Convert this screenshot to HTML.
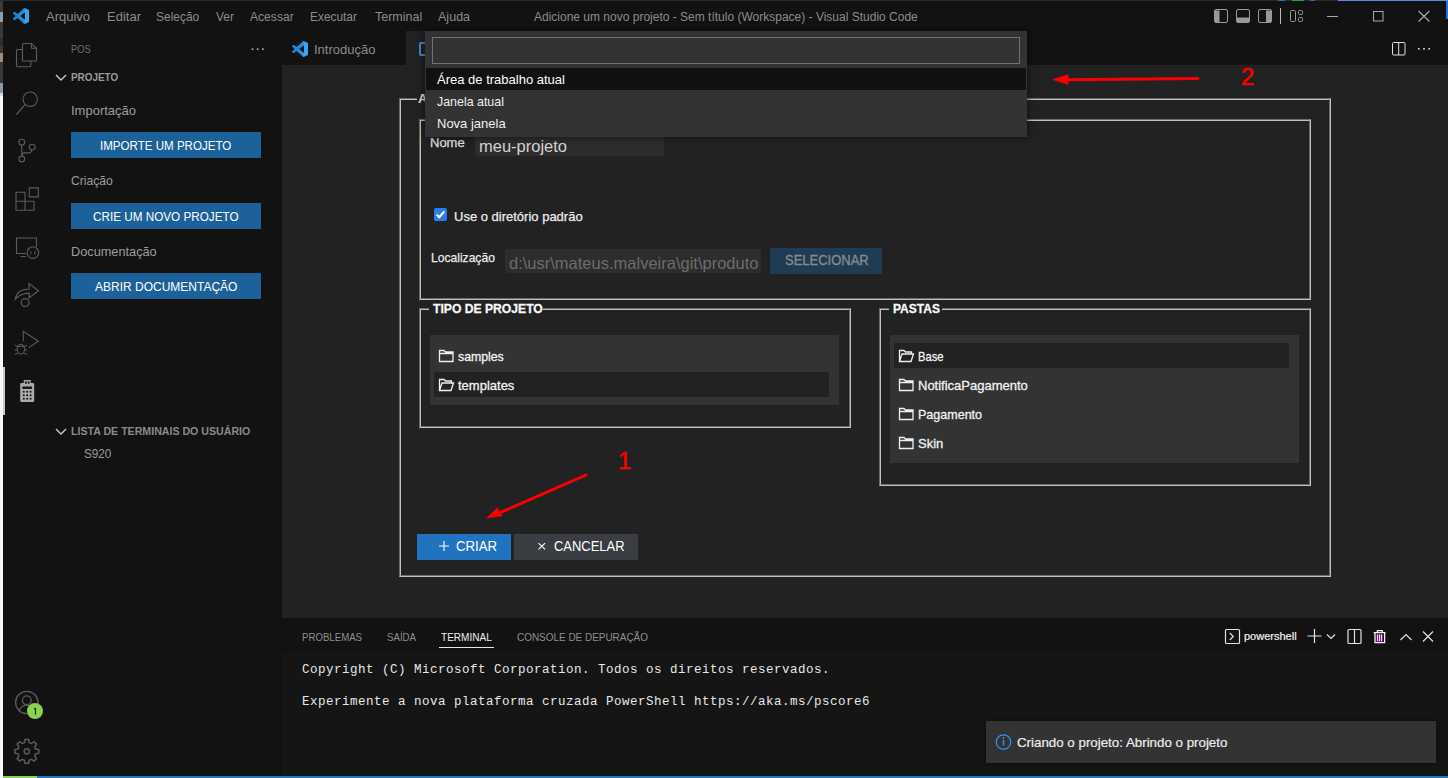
<!DOCTYPE html>
<html><head><meta charset="utf-8">
<style>
*{margin:0;padding:0;box-sizing:border-box}
html,body{width:1448px;height:778px;overflow:hidden;background:#121212;font-family:"Liberation Sans",sans-serif}
.a{position:absolute}
.t{position:absolute;white-space:nowrap;line-height:1}
svg{position:absolute;overflow:visible}
</style></head><body>
<!-- left strip of background window -->
<div class="a" style="left:0;top:0;width:3px;height:83px;background:#3a3a3a"></div>
<div class="a" style="left:0;top:12px;width:3px;height:10px;background:#8c9cac"></div>
<div class="a" style="left:0;top:38px;width:3px;height:8px;background:#2e2e2e"></div>
<div class="a" style="left:0;top:53px;width:3px;height:9px;background:#a08a78"></div>
<div class="a" style="left:0;top:83px;width:3px;height:10px;background:#8a98a8"></div>
<div class="a" style="left:0;top:93px;width:3px;height:3px;background:#d8d8d8"></div>
<div class="a" style="left:0;top:96px;width:3px;height:682px;background:#f8f8f8"></div>
<div class="a" style="left:0;top:0;width:1448px;height:1px;background:#2a2a2a"></div>
<div class="a" style="left:1278px;top:0;width:7px;height:1px;background:#2a6ad0"></div>
<div class="a" style="left:1292px;top:0;width:12px;height:1px;background:#20a050"></div>
<div class="a" style="left:1310px;top:0;width:5px;height:1px;background:#2a6ad0"></div>
<div class="a" style="left:1338px;top:0;width:110px;height:1px;background:#5a8ae0"></div>

<!-- title bar -->
<div id="titlebar" class="a" style="left:3px;top:1px;width:1445px;height:30px;background:#121212"></div>
<svg style="left:13px;top:8px" width="16" height="16" viewBox="0 0 100 100"><defs><linearGradient id="lg" x1="0" y1="0" x2="1" y2="0"><stop offset="0" stop-color="#1f80d4"/><stop offset="0.7" stop-color="#2a8fe0"/><stop offset="0.75" stop-color="#3aa4f2"/><stop offset="1" stop-color="#3aa4f2"/></linearGradient></defs>
  <path d="M96.5 10.8 75.9.9a6.2 6.2 0 0 0-7.1 1.2L29.4 38 12.2 25a4.1 4.1 0 0 0-5.3.2L1.4 30.3a4.1 4.1 0 0 0 0 6.1L16.3 50 1.4 63.6a4.1 4.1 0 0 0 0 6.1l5.5 5a4.1 4.1 0 0 0 5.3.2l17.2-13 39.4 35.9a6.2 6.2 0 0 0 7.1 1.2l20.6-9.9a6.2 6.2 0 0 0 3.5-5.6V16.4a6.2 6.2 0 0 0-3.5-5.6zM75 72.7 45.1 50 75 27.3z" fill="url(#lg)"/>
</svg>
<div class="t" style="left:46px;top:10px;font-size:13px;color:#8c8c8c">Arquivo</div>
<div class="t" style="left:107px;top:10px;font-size:13px;color:#8c8c8c">Editar</div>
<div class="t" style="left:156px;top:10px;font-size:13px;color:#8c8c8c;transform:scaleX(0.92);transform-origin:0 0">Seleção</div>
<div class="t" style="left:216px;top:10px;font-size:13px;color:#8c8c8c;transform:scaleX(0.92);transform-origin:0 0">Ver</div>
<div class="t" style="left:250px;top:10px;font-size:13px;color:#8c8c8c;transform:scaleX(0.93);transform-origin:0 0">Acessar</div>
<div class="t" style="left:310px;top:10px;font-size:13px;color:#8c8c8c;transform:scaleX(0.915);transform-origin:0 0">Executar</div>
<div class="t" style="left:375px;top:10px;font-size:13px;color:#8c8c8c;transform:scaleX(0.96);transform-origin:0 0">Terminal</div>
<div class="t" style="left:438px;top:10px;font-size:13px;color:#8c8c8c;transform:scaleX(0.965);transform-origin:0 0">Ajuda</div>
<div id="title" class="t" style="left:534px;top:11px;font-size:12px;color:#8c8c8c">Adicione um novo projeto - Sem título (Workspace) - Visual Studio Code</div>

<!-- window controls -->
<svg style="left:0;top:0" width="1448" height="65" fill="none" stroke="#999" stroke-width="1">
  <rect x="1214.5" y="9.5" width="13" height="13" rx="1.5"/>
  <path d="M1215 10.5h4.5v11.5h-4.5z" fill="#999" stroke="none"/>
  <rect x="1236.5" y="9.5" width="13" height="13" rx="1.5"/>
  <path d="M1237 17.5h12v4.5h-12z" fill="#999" stroke="none"/>
  <rect x="1258.5" y="9.5" width="13" height="13" rx="1.5"/>
  <path d="M1266 10.5h5v11.5h-5z" fill="#999" stroke="none"/>
  <path d="M1280.5 8v16" stroke="#bbb"/>
  <rect x="1290.5" y="10.5" width="5" height="11" rx="1"/>
  <rect x="1298.5" y="10.5" width="4" height="4" rx="1"/>
  <rect x="1298.5" y="17.5" width="4" height="4" rx="1"/>
  <path d="M1327 16.5h11" stroke="#aaa"/>
  <rect x="1373.5" y="11.5" width="9.5" height="9.5" stroke="#aaa"/>
  <path d="M1418.5 11l11 10.5M1429.5 11l-11 10.5" stroke="#aaa" stroke-width="1.1"/>
  <rect x="1392.5" y="42.5" width="12.5" height="12.5" rx="1" stroke="#ddd"/>
  <path d="M1398.7 42.5v12.5" stroke="#ddd"/>
  <g fill="#ddd" stroke="none"><rect x="1418" y="48" width="1.6" height="1.6"/><rect x="1423.2" y="48" width="1.6" height="1.6"/><rect x="1428.4" y="48" width="1.6" height="1.6"/></g>
  <!-- sidebar ... and chevrons -->
  <g fill="#aaa" stroke="none"><rect x="251.7" y="48.3" width="1.7" height="1.7"/><rect x="256.8" y="48.3" width="1.7" height="1.7"/><rect x="262" y="48.3" width="1.7" height="1.7"/></g>
</svg>
<div class="a" style="left:1446px;top:1px;width:2px;height:18px;background:#1a73e8"></div>

<!-- activity bar -->
<div id="actbar" class="a" style="left:3px;top:31px;width:48px;height:745px;background:#121212"></div>
<svg style="left:0;top:0" width="51" height="778" fill="none" stroke="#5c5c5c" stroke-width="1.1">
  <!-- files -->
  <path d="M22.5 49.5h-5a1 1 0 0 0-1 1v15.3a1 1 0 0 0 1 1h12.3a1 1 0 0 0 1-1v-5.3"/>
  <path d="M23.5 43.5h8l5 4.8v11.7a1 1 0 0 1-1 1h-12a1 1 0 0 1-1-1v-15.5a1 1 0 0 1 1-1z"/>
  <path d="M31.5 43.5v4.8h5"/>
  <!-- search -->
  <circle cx="30.2" cy="99.2" r="7.2"/>
  <path d="M25.2 104.3 16.4 114.6" stroke-width="1.3"/>
  <!-- scm -->
  <circle cx="21.8" cy="142.2" r="2.9"/>
  <circle cx="32.2" cy="147.1" r="2.9"/>
  <circle cx="21.8" cy="159" r="2.9"/>
  <path d="M21.8 145.1v11M21.8 156c0-2.4 1.2-3.1 3.2-3.1h4.2c1.4 0 2.2-1 2.6-3"/>
  <!-- extensions -->
  <path d="M16 192.2h9v9h-9zM16 201.2h9v9h-9zM25 201.2h9v9h-9z"/>
  <path d="M29.3 187.9h9v9h-9z"/>
  <!-- remote explorer -->
  <path d="M26 253.5h-9.5v-15.5h20v8.5"/>
  <path d="M20.5 256.5h5.5"/>
  <circle cx="32.9" cy="252.6" r="5.8"/>
  <path d="M29.8 251l2 1.8-2 1.8M36 251l-2 1.8 2 1.8" stroke-width="0.9"/>
  <!-- live share -->
  <path d="M15.3 299.2c0.8-6.5 6-10 13.8-10.2v-5.4l9.3 7.2-9.3 7.1v-4.8c-6 0.1-10.6 2.5-13.8 6.1z" stroke-width="1.2"/>
  <circle cx="25.1" cy="302.6" r="3.9" stroke-width="1.2"/>
  <!-- run & debug -->
  <path d="M23.3 341.2v-10l15 10-9.7 6.4"/>
  <ellipse cx="20.9" cy="349.2" rx="3.6" ry="4.8"/>
  <path d="M17.5 346.5h7M15 345l2.5 1.6M26.8 345l-2.5 1.6M14.8 350h2.3M24.7 350h2.3M15 354.6l2.5-1.6M26.8 354.6l-2.5-1.6"/>
  <!-- accounts -->
  <circle cx="26.8" cy="702.5" r="11.2" stroke-width="1.3"/>
  <circle cx="26.8" cy="700.2" r="4.4" stroke-width="1.3"/>
  <path d="M19 710.5c1.8-3.4 4.6-5.4 7.8-5.4s6 2 7.8 5.4" stroke-width="1.3"/>
  <!-- gear -->
  <path d="M25 739.5h3.6l0.6 3.1 2.2 0.9 2.6-1.8 2.5 2.5-1.8 2.6 0.9 2.2 3.1 0.6v3.6l-3.1 0.6-0.9 2.2 1.8 2.6-2.5 2.5-2.6-1.8-2.2 0.9-0.6 3.1H25l-0.6-3.1-2.2-0.9-2.6 1.8-2.5-2.5 1.8-2.6-0.9-2.2-3.1-0.6v-3.6l3.1-0.6 0.9-2.2-1.8-2.6 2.5-2.5 2.6 1.8 2.2-0.9z" stroke-width="1.5"/>
  <circle cx="26.8" cy="751.3" r="2.6" stroke-width="1.5"/>
</svg>
<!-- active indicator + calculator icon -->
<div class="a" style="left:3px;top:367px;width:2px;height:48px;background:#c8c8c8"></div>
<svg style="left:0;top:0" width="51" height="420">
  <path d="M21.5 383h2.2v-3h7v3h2.2a1.3 1.3 0 0 1 1.3 1.3v16.4a1.3 1.3 0 0 1-1.3 1.3H21.5a1.3 1.3 0 0 1-1.3-1.3V384.3a1.3 1.3 0 0 1 1.3-1.3z" fill="#aaaaaa"/>
  <path d="M25 381.2h1.6v2.6H25zM27.8 381.2h1.6v2.6h-1.6z" fill="#121212"/>
  <rect x="22.3" y="386.5" width="9.8" height="2.4" fill="#121212"/>
  <g fill="#121212">
    <circle cx="23.8" cy="391.8" r="1"/><circle cx="27.2" cy="391.8" r="1"/><circle cx="30.6" cy="391.8" r="1"/>
    <circle cx="23.8" cy="395.3" r="1"/><circle cx="27.2" cy="395.3" r="1"/><circle cx="30.6" cy="395.3" r="1"/>
    <circle cx="23.8" cy="398.8" r="1"/><circle cx="27.2" cy="398.8" r="1"/><circle cx="30.6" cy="398.8" r="1"/>
  </g>
</svg>
<!-- account badge -->
<div class="a" style="left:27px;top:703px;width:16px;height:16px;border-radius:50%;background:#8bd24f"></div>
<svg style="left:0;top:0" width="51" height="778"><path d="M35.5 708v6.8M35.5 708.2l-1.3 1" stroke="#3a1a22" stroke-width="1.1" fill="none"/></svg>

<!-- sidebar -->
<div class="t" style="left:71px;top:44px;font-size:11px;color:#6e6e6e;transform:scaleX(0.85);transform-origin:0 0">POS</div>
<div class="t" style="left:71px;top:72px;font-size:11px;font-weight:bold;color:#9a9a9a;transform:scaleX(0.9);transform-origin:0 0">PROJETO</div>
<div class="t" style="left:71px;top:104px;font-size:13px;color:#9d9d9d">Importação</div>
<div class="a" style="left:71px;top:132px;width:190px;height:26px;background:#1c619a"></div>
<div class="t" style="left:100px;top:140px;font-size:12px;color:#fff;transform:scaleX(0.964);transform-origin:0 0">IMPORTE UM PROJETO</div>
<div class="t" style="left:71px;top:174px;font-size:13px;color:#9d9d9d;transform:scaleX(0.935);transform-origin:0 0">Criação</div>
<div class="a" style="left:71px;top:203px;width:190px;height:26px;background:#1c619a"></div>
<div class="t" style="left:93px;top:211px;font-size:12px;color:#fff;transform:scaleX(0.976);transform-origin:0 0">CRIE UM NOVO PROJETO</div>
<div class="t" style="left:71px;top:245px;font-size:13px;color:#9d9d9d;transform:scaleX(0.98);transform-origin:0 0">Documentação</div>
<div class="a" style="left:71px;top:273px;width:190px;height:26px;background:#1c619a"></div>
<div class="t" style="left:95px;top:281px;font-size:12px;color:#fff">ABRIR DOCUMENTAÇÃO</div>
<div class="t" style="left:71px;top:426px;font-size:11px;font-weight:bold;color:#8a8a8a;transform:scaleX(0.965);transform-origin:0 0">LISTA DE TERMINAIS DO USUÁRIO</div>
<div class="t" style="left:84px;top:447px;font-size:13px;color:#9d9d9d;transform:scaleX(0.9);transform-origin:0 0">S920</div>

<!-- tabs -->
<div class="a" style="left:406px;top:31px;width:200px;height:34px;background:#222"></div>
<div class="t" style="left:314px;top:43px;font-size:13px;color:#8c8c8c">Introdução</div>
<svg style="left:292px;top:41px" width="16" height="16" viewBox="0 0 100 100">
  <path d="M96.5 10.8 75.9.9a6.2 6.2 0 0 0-7.1 1.2L29.4 38 12.2 25a4.1 4.1 0 0 0-5.3.2L1.4 30.3a4.1 4.1 0 0 0 0 6.1L16.3 50 1.4 63.6a4.1 4.1 0 0 0 0 6.1l5.5 5a4.1 4.1 0 0 0 5.3.2l17.2-13 39.4 35.9a6.2 6.2 0 0 0 7.1 1.2l20.6-9.9a6.2 6.2 0 0 0 3.5-5.6V16.4a6.2 6.2 0 0 0-3.5-5.6zM75 72.7 45.1 50 75 27.3z" fill="url(#lg)"/>
</svg>
<div class="a" style="left:419px;top:42px;width:12px;height:14px;border:2px solid #3c8ad6;border-radius:2px"></div>

<!-- editor -->
<div id="editor" class="a" style="left:282px;top:65px;width:1166px;height:553px;background:#222"></div>
<div class="a" style="left:399px;top:98px;width:932px;height:479px;border:2px groove rgb(192,192,192)"></div>
<div class="a" style="left:419px;top:119px;width:892px;height:181px;border:2px groove rgb(192,192,192)"></div>
<div class="a" style="left:419px;top:308px;width:432px;height:120px;border:2px groove rgb(192,192,192)"></div>
<div class="a" style="left:879px;top:308px;width:432px;height:178px;border:2px groove rgb(192,192,192)"></div>

<!-- form content -->
<div class="a" style="left:475px;top:135px;width:189px;height:21px;border-radius:3px;background:#2d2d2d"></div>
<div class="t" style="left:430px;top:136px;font-size:13px;color:#e0e0e0;-webkit-text-stroke:0.25px #e0e0e0">Nome</div>
<div class="t" style="left:479px;top:138px;font-size:16.5px;color:#d4d4d4">meu-projeto</div>
<div class="a" style="left:434px;top:208px;width:13px;height:13px;border-radius:2px;background:#2a7de8"></div>
<svg style="left:434px;top:208px" width="13" height="13"><path d="M2.6 6.6l2.6 2.6 5.2-5.8" fill="none" stroke="#fff" stroke-width="2"/></svg>
<div class="t" style="left:454px;top:210px;font-size:13px;color:#ececec;-webkit-text-stroke:0.25px #ececec">Use o diretório padrão</div>
<div class="t" style="left:431px;top:251px;font-size:13px;color:#eaeaea;-webkit-text-stroke:0.25px #eaeaea;transform:scaleX(0.93);transform-origin:0 0">Localização</div>
<div class="a" style="left:505px;top:249px;width:256px;height:24px;border-radius:3px;background:#2d2d2d;overflow:hidden">
  <div class="t" style="left:4px;top:6px;font-size:16.5px;color:#6c6c6c">d:\usr\mateus.malveira\git\produto</div>
</div>
<div class="a" style="left:770px;top:248px;width:112px;height:26px;background:#203c55"></div>
<div class="t" style="left:785px;top:253px;font-size:14px;color:#8a8a8a;-webkit-text-stroke:0.3px #8a8a8a;transform:scaleX(0.927);transform-origin:0 0">SELECIONAR</div>

<!-- legends -->
<div class="a" style="left:417px;top:94px;width:20px;height:10px;background:#222"></div>
<div class="t" style="left:418px;top:92px;font-size:13px;font-weight:bold;color:#e0e0e0">ADICIONE</div>
<div class="a" style="left:429px;top:300px;width:114px;height:14px;background:#222"></div>
<div class="t" style="left:433px;top:302px;font-size:13.5px;font-weight:bold;color:#f8f8f8;-webkit-text-stroke:0.3px #f8f8f8;transform:scaleX(0.9);transform-origin:0 0">TIPO DE PROJETO</div>
<div class="a" style="left:889px;top:300px;width:53px;height:14px;background:#222"></div>
<div class="t" style="left:893px;top:302px;font-size:13.5px;font-weight:bold;color:#f8f8f8;-webkit-text-stroke:0.3px #f8f8f8;transform:scaleX(0.89);transform-origin:0 0">PASTAS</div>

<!-- lists -->
<div class="a" style="left:430px;top:335px;width:409px;height:70px;background:#333"></div>
<div class="a" style="left:434px;top:372px;width:395px;height:25px;background:#222"></div>
<div class="a" style="left:890px;top:335px;width:409px;height:128px;background:#333"></div>
<div class="a" style="left:894px;top:343px;width:395px;height:25px;background:#222"></div>
<svg style="left:0;top:0" width="1448" height="778" fill="none" stroke="#f0f0f0" stroke-width="1.3">
  <path transform="translate(439 349)" d="M0.5 1.5h4.5l1.5 1.5h7.5v9.5h-13.5z M0.5 4.5h13.5"/>
  <path transform="translate(439 378)" d="M0.5 12.5v-11h4.5l1.5 1.5h6v2.5 M0.5 12.5l2.5-7.5h11.5l-2.5 7.5z"/>
  <path transform="translate(899 349)" d="M0.5 12.5v-11h4.5l1.5 1.5h6v2.5 M0.5 12.5l2.5-7.5h11.5l-2.5 7.5z"/>
  <path transform="translate(899 378)" d="M0.5 1.5h4.5l1.5 1.5h7.5v9.5h-13.5z M0.5 4.5h13.5"/>
  <path transform="translate(899 407)" d="M0.5 1.5h4.5l1.5 1.5h7.5v9.5h-13.5z M0.5 4.5h13.5"/>
  <path transform="translate(899 436)" d="M0.5 1.5h4.5l1.5 1.5h7.5v9.5h-13.5z M0.5 4.5h13.5"/>
</svg>
<div class="t" style="left:458px;top:350px;font-size:13px;color:#f2f2f2;-webkit-text-stroke:0.3px #f2f2f2;transform:scaleX(0.945);transform-origin:0 0">samples</div>
<div class="t" style="left:458px;top:379px;font-size:13px;color:#f2f2f2;-webkit-text-stroke:0.3px #f2f2f2">templates</div>
<div class="t" style="left:918px;top:350px;font-size:13px;color:#f2f2f2;-webkit-text-stroke:0.3px #f2f2f2;transform:scaleX(0.86);transform-origin:0 0">Base</div>
<div class="t" style="left:918px;top:379px;font-size:13px;color:#f2f2f2;-webkit-text-stroke:0.3px #f2f2f2">NotificaPagamento</div>
<div class="t" style="left:918px;top:408px;font-size:13px;color:#f2f2f2;-webkit-text-stroke:0.3px #f2f2f2;transform:scaleX(0.963);transform-origin:0 0">Pagamento</div>
<div class="t" style="left:918px;top:437px;font-size:13px;color:#f2f2f2;-webkit-text-stroke:0.3px #f2f2f2">Skin</div>

<!-- buttons -->
<div class="a" style="left:417px;top:534px;width:94px;height:26px;background:#2173bf"></div>

<div class="t" style="left:456px;top:539px;font-size:14px;color:#fff;transform:scaleX(0.944);transform-origin:0 0">CRIAR</div>
<div class="a" style="left:514px;top:534px;width:124px;height:26px;background:#3a3d41"></div>
<div class="t" style="left:554px;top:539px;font-size:14px;color:#fff;transform:scaleX(0.925);transform-origin:0 0">CANCELAR</div>
<svg style="left:0;top:0" width="1448" height="778" fill="none" stroke="#fff" stroke-width="1.1">
  <path d="M444 541v10M439 546h10"/>
  <path d="M538.5 543.2l6.6 6.2M545.1 543.2l-6.6 6.2"/>
</svg>

<!-- annotations -->
<svg style="left:0;top:0" width="1448" height="778">
  <path d="M586 475 497 514" stroke="#fa0000" stroke-width="3" stroke-linecap="round" fill="none"/>
  <path d="M486.8 518 497.5 508 502 515.8z" fill="#fa0000" stroke="#fa0000" stroke-width="0.8" stroke-linejoin="round"/>
  <path d="M1198 78.5 1066 79.8" stroke="#fa0000" stroke-width="3" stroke-linecap="round" fill="none"/>
  <path d="M1053 79.6 1068 74.7v9.6z" fill="#fa0000" stroke="#fa0000" stroke-width="0.8" stroke-linejoin="round"/>
</svg>
<div class="t" style="left:618px;top:449px;font-size:24px;color:#fa0000;-webkit-text-stroke:0.5px #fa0000">1</div>
<div class="t" style="left:1241px;top:65px;font-size:24px;color:#fa0000;-webkit-text-stroke:0.5px #fa0000">2</div>

<!-- dropdown / quick pick -->
<div class="a" style="left:425px;top:31px;width:602px;height:106px;background:#333;box-shadow:0 0 8px rgba(0,0,0,.6)"></div>
<div class="a" style="left:432px;top:37px;width:588px;height:27px;border:1px solid #727272;background:#333"></div>
<div class="a" style="left:426px;top:68px;width:600px;height:22px;background:#111"></div>
<div class="t" style="left:437px;top:73px;font-size:13px;color:#fff">Área de trabalho atual</div>
<div class="t" style="left:437px;top:95px;font-size:13px;color:#f0f0f0;transform:scaleX(0.954);transform-origin:0 0">Janela atual</div>
<div class="t" style="left:437px;top:117px;font-size:13px;color:#f0f0f0">Nova janela</div>

<!-- panel -->
<div id="panel" class="a" style="left:282px;top:618px;width:1166px;height:158px;background:#121212"></div>
<div class="a" style="left:282px;top:653px;width:1166px;height:123px;background:#151515"></div>
<div class="t" style="left:302px;top:632px;font-size:11px;color:#8f8f8f;transform:scaleX(0.877);transform-origin:0 0">PROBLEMAS</div>
<div class="t" style="left:387px;top:632px;font-size:11px;color:#8f8f8f;transform:scaleX(0.88);transform-origin:0 0">SAÍDA</div>
<div class="t" style="left:441px;top:632px;font-size:11px;color:#f0f0f0;transform:scaleX(0.912);transform-origin:0 0">TERMINAL</div>
<div class="a" style="left:439px;top:647px;width:55px;height:1px;background:#e8e8e8"></div>
<div class="t" style="left:517px;top:632px;font-size:11px;color:#8f8f8f;transform:scaleX(0.904);transform-origin:0 0">CONSOLE DE DEPURAÇÃO</div>
<div class="t" style="left:302px;top:662px;font-size:12.5px;letter-spacing:0.5px;line-height:16px;font-family:'Liberation Mono',monospace;color:#e8e8e8;white-space:pre">Copyright (C) Microsoft Corporation. Todos os direitos reservados.

Experimente a nova plataforma cruzada PowerShell https://aka.ms/pscore6</div>
<svg style="left:0;top:0" width="1448" height="778" fill="none" stroke="#e2e2e2" stroke-width="1.2">
  <rect x="1225.5" y="629.5" width="14" height="14" rx="1"/>
  <path d="M1229.8 633l3.5 3.5-3.5 3.5"/>
  <path d="M1314.5 629v14M1307.5 636h14" stroke-width="1.2"/>
  <path d="M1327 634.5l4 4 4-4"/>
  <rect x="1348" y="629.5" width="13" height="14" rx="1"/>
  <path d="M1354.5 629.5v14"/>
  <rect x="1376.3" y="634.3" width="6.6" height="7.2" fill="#9c1cb0" stroke="none"/>
  <g stroke="#f4f4f4" stroke-width="1.3">
    <path d="M1373.6 632.6h12M1377.4 632.6v-2h4.8v2M1375 632.6v10h9.6v-10"/>
    <path d="M1377.5 634.5v6.8M1379.5 634.5v6.8M1381.5 634.5v6.8" stroke-width="0.9"/>
  </g>
  <path d="M1400.5 640l5.5-5.5 5.5 5.5"/>
  <path d="M1423 631.5l10 10M1433 631.5l-10 10"/>
  <!-- chevrons sidebar -->
  <path d="M56 75l5 5 5-5" stroke="#d0d0d0" stroke-width="1.3"/>
  <path d="M56 429l5 5 5-5" stroke="#d0d0d0" stroke-width="1.3"/>
</svg>
<div class="t" style="left:1244px;top:631px;font-size:11px;color:#f0f0f0;-webkit-text-stroke:0.2px #f0f0f0">powershell</div>
<!-- notification -->
<div class="a" style="left:986px;top:721px;width:450px;height:42px;background:#333;box-shadow:0 0 6px rgba(0,0,0,.5)"></div>
<svg style="left:0;top:0" width="1448" height="778"><circle cx="1003.5" cy="742" r="7.2" fill="none" stroke="#3794ff" stroke-width="1.2"/><path d="M1003.5 740v5.5" stroke="#3794ff" stroke-width="1.4"/><circle cx="1003.5" cy="737.8" r="0.9" fill="#3794ff"/></svg>
<div class="t" style="left:1017px;top:736px;font-size:13px;color:#ececec;-webkit-text-stroke:0.2px #ececec;transform:scaleX(1.025);transform-origin:0 0">Criando o projeto: Abrindo o projeto</div>

<!-- status bar -->
<div class="a" style="left:3px;top:776px;width:34px;height:2px;background:#8bd24f"></div>
<div class="a" style="left:37px;top:776px;width:1411px;height:2px;background:#1f7ac6"></div>

</body></html>
